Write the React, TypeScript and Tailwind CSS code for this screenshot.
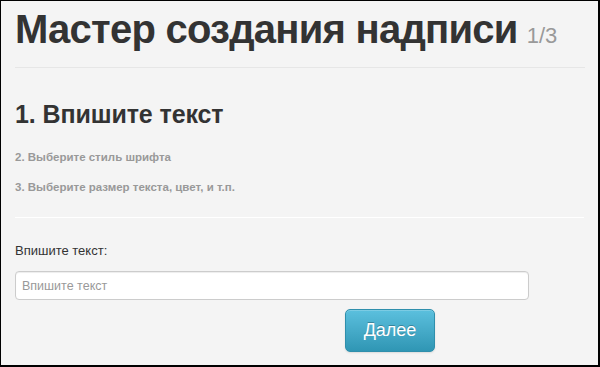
export default function App() {
  return (
    <div
      className="w-[600px] h-[367px] overflow-hidden border-t border-l border-r-2 border-b-2 border-black bg-[#f4f4f4] text-[#333]"
      style={{ fontFamily: '"Liberation Sans", Arial, sans-serif' }}
    >
      <div className="px-[14px]">
        {/* Header */}
        <div className="pt-[5px] pb-[8px] border-b border-[#e6e6e6] mr-[-1px]">
          <h1 className="text-[40px] leading-[46px] font-bold tracking-[-0.75px] text-[#333]">
            Мастер создания надписи
            <span className="ml-[9px] text-[22px] font-normal tracking-normal text-[#999]">1/3</span>
          </h1>
        </div>

        {/* Steps */}
        <div className="pt-[31px] pb-[23px] border-b border-white">
          <h2 className="text-[25px] leading-[30px] font-bold tracking-[-0.1px] text-[#333]">1. Впишите текст</h2>
          <p className="mt-[21px] text-[11.5px] leading-[14px] font-bold text-[#999]">
            2. Выберите стиль шрифта
          </p>
          <p className="mt-[16px] text-[11.5px] leading-[14px] font-bold text-[#999]">
            3. Выберите размер текста, цвет, и т.п.
          </p>
        </div>

        {/* Form */}
        <div className="pt-[24px]">
          <label className="block text-[13px] leading-[18px] text-[#333]">Впишите текст:</label>
          <input
            type="text"
            placeholder="Впишите текст"
            className="mt-[11px] block w-[514px] h-[29px] px-[6px] bg-white border border-[#ccc] rounded-[4px] text-[12.5px] text-[#555] placeholder:text-[#999] shadow-[inset_0_1px_1px_rgba(0,0,0,0.075)] outline-none"
          />
          <div className="mt-[9px] pl-[330px]">
            <button className="w-[90px] h-[43px] rounded-[5px] border border-[#2f8fac] bg-gradient-to-b from-[#5bc0de] to-[#2f96b4] text-white text-[18px] shadow-[inset_0_1px_0_rgba(255,255,255,0.2),0_1px_2px_rgba(0,0,0,0.1)] [text-shadow:0_-1px_0_rgba(0,0,0,0.25)]">
              Далее
            </button>
          </div>
        </div>
      </div>
    </div>
  );
}
